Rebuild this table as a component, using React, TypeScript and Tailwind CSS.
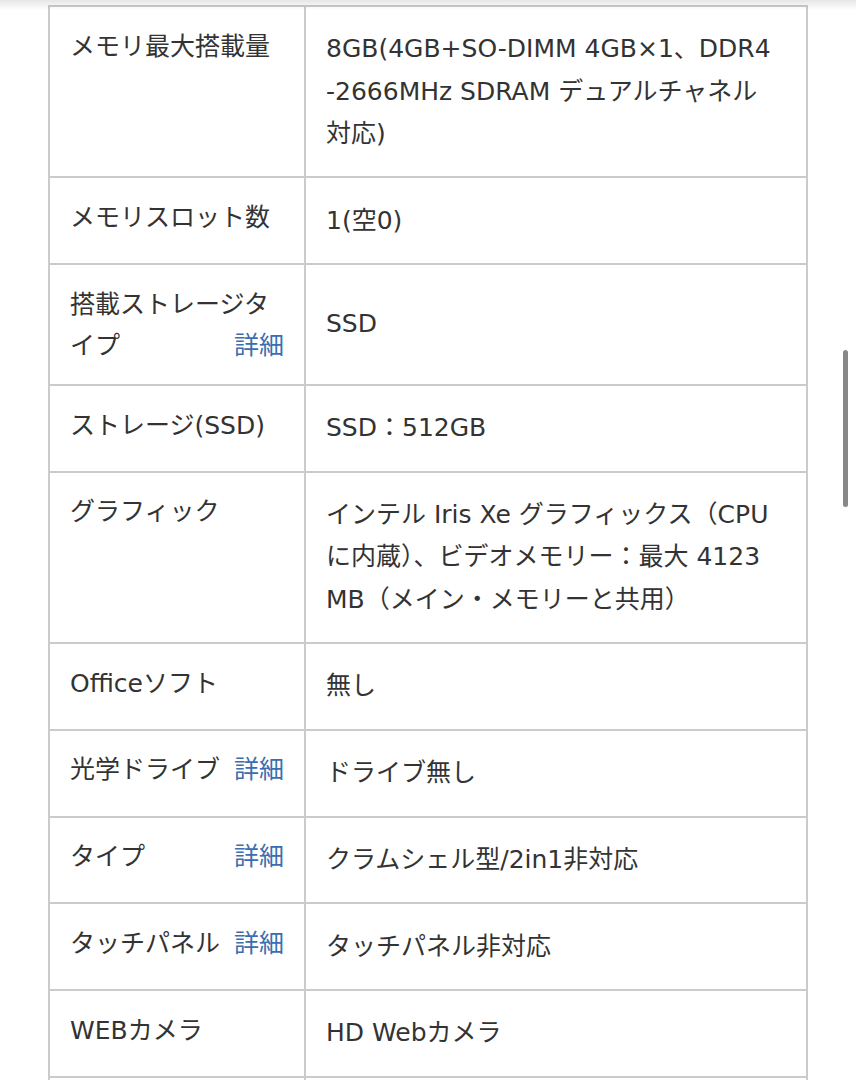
import React from 'react';

type Spec = { label: string; value: React.ReactNode; detail?: boolean };

const SPECS: Spec[] = [
  {
    label: 'メモリ最大搭載量',
    value: (
      <>
        8GB(4GB+SO-DIMM 4GB×1、DDR4
        <br />
        -2666MHz SDRAM デュアルチャネル
        <br />
        対応)
      </>
    ),
  },
  { label: 'メモリスロット数', value: '1(空0)' },
  { label: '搭載ストレージタイプ', value: 'SSD', detail: true },
  { label: 'ストレージ(SSD)', value: 'SSD：512GB' },
  {
    label: 'グラフィック',
    value: (
      <>
        インテル Iris Xe グラフィックス（CPU
        <br />
        に内蔵）、ビデオメモリー：最大 4123
        <br />
        MB（メイン・メモリーと共用）
      </>
    ),
  },
  { label: 'Officeソフト', value: '無し' },
  { label: '光学ドライブ', value: 'ドライブ無し', detail: true },
  { label: 'タイプ', value: 'クラムシェル型/2in1非対応', detail: true },
  { label: 'タッチパネル', value: 'タッチパネル非対応', detail: true },
  { label: 'WEBカメラ', value: 'HD Webカメラ' },
  { label: '', value: '' },
];

const App: React.FC = () => {
  return (
    <div
      className="relative w-[856px] h-[1080px] overflow-hidden bg-white text-[#333]"
      style={{ fontFamily: '"DejaVu Sans", "Noto Sans CJK JP", sans-serif' }}
    >
      {/* header shadow */}
      <div className="absolute top-0 left-0 right-0 h-[10px] bg-gradient-to-b from-black/10 to-transparent z-10 pointer-events-none"></div>

      <div className="pt-[5px] pl-[48px] pr-[48px]">
        <table className="w-[760px] border-collapse text-[25px] table-fixed">
          <colgroup>
            <col className="w-[256px]" />
            <col />
          </colgroup>
          <tbody>
            {SPECS.map((s, i) => (
              <tr key={i}>
                <th className="border-2 border-[#cbcbcb] px-[20px] py-[18.5px] align-top text-left font-normal leading-[41px]">
                  {s.label}
                  {s.detail && <a className="float-right ml-2 text-[#3b6eb0]">詳細</a>}
                </th>
                <td className="border-2 border-[#cbcbcb] px-[20px] py-[21.3px] align-middle leading-[42.2px]">
                  {s.value}
                </td>
              </tr>
            ))}
          </tbody>
        </table>
      </div>

      {/* scrollbar */}
      <div className="absolute left-[843px] top-[350px] w-[5px] h-[157px] rounded-full bg-[#888]"></div>
    </div>
  );
};

export default App;
